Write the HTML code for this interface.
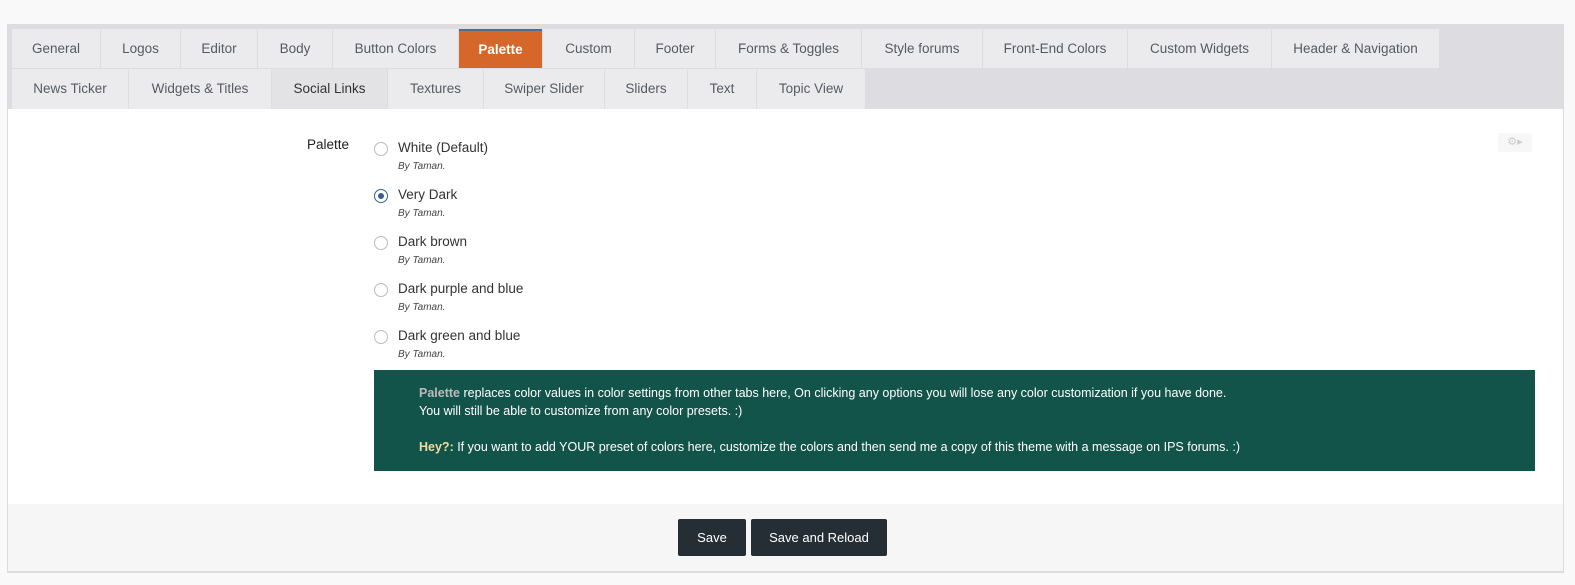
<!DOCTYPE html><html><head><style>
body{margin:0;width:1575px;height:585px;background:#f9f9f9;font-family:"Liberation Sans",sans-serif;position:relative;overflow:hidden}
.box{position:absolute;left:7px;top:24px;width:1555px;height:546px;background:#fff;border:1px solid #dcdcdc;border-bottom:2px solid #dcdcdc}
.in{position:absolute;left:2px;top:0;width:1553px;height:546px}
.bar{position:absolute;left:-2px;top:0;width:1555px;height:84px;background:#dddde1}
.t{position:absolute;height:39px;background:#ebebed;color:#555a63;font-size:13.5px;line-height:40px;text-align:center}
.a{background:#d5672a;color:#fff;font-weight:bold;border-top:2px solid #4e6e8e;height:37px;line-height:38px}
.s{background:#e3e3e6;color:#333}
.r{position:absolute;left:364px;font-size:13.5px;color:#333}
.r i{position:absolute;left:0;top:2px;width:12px;height:12px;border:1px solid #bbb;border-radius:50%;background:#fff}
.r span{position:absolute;left:24px;top:0;white-space:nowrap}
.r em{position:absolute;left:24px;top:21px;font-size:10px;color:#444;white-space:nowrap}
.g{position:absolute;left:364px;top:345px;width:1161px;height:101px;background:#13544a;color:#fff;font-size:12.5px;line-height:18px}
.foot{position:absolute;left:-2px;top:479px;width:1555px;height:67px;background:#f6f6f6}
.b{position:absolute;top:15px;height:37px;background:#262e35;color:#fff;font-size:13px;line-height:37px;text-align:center;border-radius:2px}
</style></head><body>
<div class="box"><div class="in">
<div class="bar"><div style="position:absolute;left:0;top:0">
<div class="t" style="left:4px;top:4px;width:88px">General</div>
<div class="t" style="left:93px;top:4px;width:79px">Logos</div>
<div class="t" style="left:173px;top:4px;width:76px">Editor</div>
<div class="t" style="left:250px;top:4px;width:74px">Body</div>
<div class="t" style="left:325px;top:4px;width:125px">Button Colors</div>
<div class="t a" style="left:451px;top:4px;width:83px">Palette</div>
<div class="t" style="left:535px;top:4px;width:91px">Custom</div>
<div class="t" style="left:627px;top:4px;width:80px">Footer</div>
<div class="t" style="left:708px;top:4px;width:145px">Forms &amp; Toggles</div>
<div class="t" style="left:854px;top:4px;width:120px">Style forums</div>
<div class="t" style="left:975px;top:4px;width:144px">Front-End Colors</div>
<div class="t" style="left:1120px;top:4px;width:143px">Custom Widgets</div>
<div class="t" style="left:1264px;top:4px;width:167px">Header &amp; Navigation</div>
<div class="t" style="left:4px;top:44px;width:116px;height:40px">News Ticker</div>
<div class="t" style="left:121px;top:44px;width:142px;height:40px">Widgets &amp; Titles</div>
<div class="t s" style="left:264px;top:44px;width:115px;height:40px">Social Links</div>
<div class="t" style="left:380px;top:44px;width:95px;height:40px">Textures</div>
<div class="t" style="left:476px;top:44px;width:120px;height:40px">Swiper Slider</div>
<div class="t" style="left:597px;top:44px;width:82px;height:40px">Sliders</div>
<div class="t" style="left:680px;top:44px;width:68px;height:40px">Text</div>
<div class="t" style="left:749px;top:44px;width:108px;height:40px">Topic View</div>
</div></div>
<div style="position:absolute;left:297px;top:112px;font-size:13.5px;color:#222">Palette</div>
<div style="position:absolute;left:1488px;top:108px;width:34px;height:19px;background:#f7f7f7;border-radius:3px;color:#ccc;font-size:11px;text-align:center;line-height:19px">⚙▸</div>
<div class="r" style="top:115px"><i></i><span>White (Default)</span><em>By Taman.</em></div>
<div class="r" style="top:162px"><i style="border-color:#3a5f8f"><b style="position:absolute;left:3px;top:3px;width:6px;height:6px;border-radius:50%;background:#3a5f8f"></b></i><span>Very Dark</span><em>By Taman.</em></div>
<div class="r" style="top:209px"><i></i><span>Dark brown</span><em>By Taman.</em></div>
<div class="r" style="top:256px"><i></i><span>Dark purple and blue</span><em>By Taman.</em></div>
<div class="r" style="top:303px"><i></i><span>Dark green and blue</span><em>By Taman.</em></div>
<div class="g"><div style="position:absolute;left:45px;top:14px;white-space:nowrap"><b style="color:#bbb">Palette</b> replaces color values in color settings from other tabs here, On clicking any options you will lose any color customization if you have done.<br>You will still be able to customize from any color presets. :)<br><br><b style="color:#f0d9a0">Hey?:</b> If you want to add YOUR preset of colors here, customize the colors and then send me a copy of this theme with a message on IPS forums. :)</div></div>
<div class="foot">
<div class="b" style="left:670px;width:68px">Save</div>
<div class="b" style="left:743px;width:136px">Save and Reload</div>
</div>
</div></div>
</body></html>
